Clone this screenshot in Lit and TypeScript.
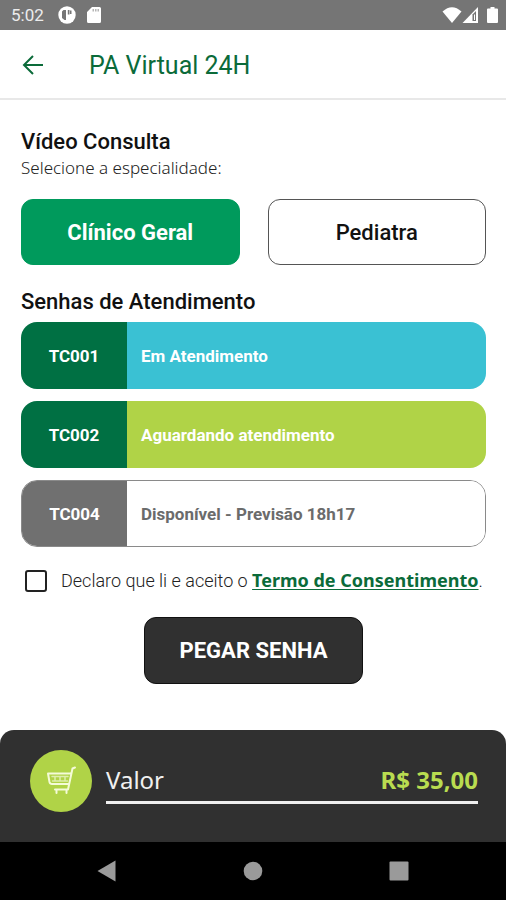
import { LitElement, html, css } from "lit";
import { customElement, property, state } from "lit/decorators.js";
import { classMap } from "lit/directives/class-map.js";

interface Ticket {
  code: string;
  label: string;
  status: "active" | "waiting" | "free";
}

@customElement("status-bar")
class StatusBar extends LitElement {
  static styles = css`
    :host {
      display: flex;
      align-items: center;
      height: 30px;
      padding: 0 8px 0 11px;
      background: #757575;
      color: #ececec;
      font: 400 17px/30px Roboto, sans-serif;
    }
    .time {
      margin-right: 14px;
    }
    .left {
      display: flex;
      align-items: center;
      gap: 11px;
      flex: 1;
    }
    .right {
      display: flex;
      align-items: center;
    }
    svg {
      display: block;
      fill: #ffffff;
    }
    .battery {
      margin-left: 8px;
    }
  `;

  render() {
    return html`
      <span class="time">5:02</span>
      <div class="left">
        <svg width="18" height="18" viewBox="0 0 18 18">
          <circle cx="9" cy="9" r="8.700" />
          <path fill="#757575" d="M4 5.500L5.500 4H8v10H6.500L4 12zM9.800 4h1.700v4.500H9.800zM12 4.500h1.500v3.500H12z" />
        </svg>
        <svg width="14" height="16" viewBox="0 0 14 16">
          <path d="M5 0h7.500A1.500 1.500 0 0 1 14 1.500v13a1.500 1.500 0 0 1-1.500 1.500h-11A1.500 1.500 0 0 1 0 14.500V5z" />
          <path fill="#b5b5b5" d="M5.500 2H7v2.500H5.500zM8 2h1.500v2.500H8zM10.500 2H12v2.500h-1.500z" />
        </svg>
      </div>
      <div class="right">
        <svg width="20" height="16" viewBox="0 0 20 16">
          <path d="M0.500 4.500Q10-4 19.500 4.500L10 16z" />
        </svg>
        <svg width="17" height="16" viewBox="0 0 17 16">
          <path d="M0.500 16L16 0v16z" />
          <path fill="#757575" d="M10.500 7.500l3.500-3.500V14h-3.500z" />
          <path d="M12 7.500h1V13h-1z" />
        </svg>
        <svg class="battery" width="11" height="16" viewBox="0 0 11 16">
          <path d="M3.500 0h4v1.500H10a1 1 0 0 1 1 1V15a1 1 0 0 1-1 1H1a1 1 0 0 1-1-1V2.500a1 1 0 0 1 1-1h2.500z" />
        </svg>
      </div>
    `;
  }
}

@customElement("ticket-row")
class TicketRow extends LitElement {
  @property({ attribute: false }) ticket!: Ticket;

  static styles = css`
    :host {
      display: block;
    }
    .row {
      display: flex;
      box-sizing: border-box;
      height: 67px;
      border-radius: 16px;
      overflow: hidden;
      font: 700 17px/24px Roboto, sans-serif;
      color: #ffffff;
    }
    .code {
      display: grid;
      place-items: center;
      flex: none;
      width: 106px;
      background: #007043;
    }
    .label {
      display: flex;
      align-items: center;
      flex: 1;
      padding-left: 14px;
    }
    .active .label {
      background: #3ac1d3;
    }
    .waiting .label {
      background: #b0d347;
    }
    .free {
      border: 1px solid #8a8a8a;
    }
    .free .code {
      width: 105px;
      background: #707070;
    }
    .free .label {
      background: #ffffff;
      color: #6b6b6b;
    }
  `;

  render() {
    const { code, label, status } = this.ticket;
    return html`
      <div class="row ${status}">
        <div class="code">${code}</div>
        <div class="label">${label}</div>
      </div>
    `;
  }
}

@customElement("app-root")
class AppRoot extends LitElement {
  @state() private specialty = "Clínico Geral";

  private specialties = ["Clínico Geral", "Pediatra"];

  private tickets: Ticket[] = [
    { code: "TC001", label: "Em Atendimento", status: "active" },
    { code: "TC002", label: "Aguardando atendimento", status: "waiting" },
    { code: "TC004", label: "Disponível - Previsão 18h17", status: "free" },
  ];

  static styles = css`
    :host {
      display: flex;
      flex-direction: column;
      min-height: 100vh;
      background: #ffffff;
      color: #111111;
      font-family: Roboto, sans-serif;
    }
    button {
      font-family: inherit;
      cursor: pointer;
      padding: 0;
    }
    svg {
      display: block;
    }
    .header {
      display: flex;
      align-items: center;
      gap: 44px;
      box-sizing: border-box;
      height: 70px;
      padding: 4px 21px 0;
      border-bottom: 2px solid #e8e8e8;
      color: #0b6b3a;
    }
    .back {
      border: 0;
      background: none;
      color: inherit;
    }
    h1 {
      margin: 0;
      font: 400 25px/32px Roboto, sans-serif;
    }
    main {
      display: flex;
      flex-direction: column;
      flex: 1;
      padding: 28px 20px 0 21px;
    }
    h2 {
      margin: 0;
      font: 500 22px/28px Roboto, sans-serif;
    }
    .hint {
      margin: 0 0 20px;
      font: 300 17px/23px "Noto Sans", sans-serif;
      color: #222222;
    }
    .specialties {
      display: grid;
      grid-template-columns: 1fr 1fr;
      gap: 28px;
      margin-bottom: 23px;
    }
    .specialty {
      height: 66px;
      border: 1px solid #555555;
      border-radius: 12px;
      background: #ffffff;
      color: #111111;
      font-size: 22px;
      font-weight: 500;
    }
    .specialty.selected {
      border-color: #009a5c;
      background: #009a5c;
      color: #ffffff;
      font-weight: 700;
    }
    .tickets {
      display: flex;
      flex-direction: column;
      gap: 12px;
      margin-top: 6px;
    }
    .consent {
      display: flex;
      align-items: center;
      gap: 14px;
      margin: 20px 0 23px;
      padding-left: 4px;
      font: 300 18px/26px Roboto, sans-serif;
      color: #222222;
      white-space: nowrap;
    }
    .consent input {
      appearance: none;
      flex: none;
      box-sizing: border-box;
      width: 22px;
      height: 22px;
      margin: 0;
      border: 2px solid #222222;
      border-radius: 3px;
    }
    .consent input:checked {
      background: #0b6b3a;
    }
    .consent a {
      color: #0b6b3a;
      font-family: "Noto Sans", sans-serif;
      font-weight: 700;
      text-underline-offset: 2px;
      text-decoration-thickness: 1px;
    }
    .submit {
      align-self: center;
      width: 219px;
      height: 67px;
      border: 1px solid #111111;
      border-radius: 12px;
      background: #303030;
      color: #ffffff;
      font-size: 22px;
      font-weight: 700;
    }
    .summary {
      display: flex;
      align-items: flex-start;
      gap: 14px;
      box-sizing: border-box;
      height: 112px;
      padding: 20px 28px 0 30px;
      border-radius: 14px 14px 0 0;
      background: #303030;
    }
    .cart {
      display: grid;
      place-items: center;
      flex: none;
      width: 62px;
      height: 62px;
      border-radius: 50%;
      background: #b0d347;
    }
    .line {
      display: flex;
      justify-content: space-between;
      flex: 1;
      margin-top: 14px;
      padding-bottom: 5px;
      border-bottom: 3px solid #efefef;
      font: 400 24px/32px "Noto Sans", sans-serif;
      color: #f0f0f0;
    }
    .price {
      color: #b9dc50;
      font-weight: 700;
    }
    .nav {
      display: flex;
      justify-content: space-around;
      align-items: center;
      height: 58px;
      padding: 0 34px;
      background: #000000;
    }
    .nav button {
      border: 0;
      background: none;
    }
  `;

  render() {
    return html`
      <status-bar></status-bar>
      <header class="header">
        <button class="back" aria-label="Voltar">
          <svg width="24" height="24" viewBox="0 0 24 24" fill="none" stroke="currentColor" stroke-width="2">
            <path d="M22 11H3.500M12 2L3 11l9 9" />
          </svg>
        </button>
        <h1>PA Virtual 24H</h1>
      </header>
      <main>
        <h2>Vídeo Consulta</h2>
        <p class="hint">Selecione a especialidade:</p>
        <div class="specialties">
          ${this.specialties.map(
            (name) => html`
              <button
                class=${classMap({ specialty: true, selected: name === this.specialty })}
                @click=${() => (this.specialty = name)}
              >
                ${name}
              </button>
            `
          )}
        </div>
        <h2>Senhas de Atendimento</h2>
        <div class="tickets">
          ${this.tickets.map((t) => html`<ticket-row .ticket=${t}></ticket-row>`)}
        </div>
        <div class="consent">
          <input type="checkbox" id="consent" />
          <label for="consent">Declaro que li e aceito o <a href="#termo">Termo de Consentimento</a>.</label>
        </div>
        <button class="submit">PEGAR SENHA</button>
      </main>
      <section class="summary">
        <div class="cart">
          <svg width="30" height="30" viewBox="0 0 30 30" fill="none" stroke="#f4fbd8" stroke-width="2" stroke-linecap="round" stroke-linejoin="round">
            <path d="M29 1.500l-2.500 1L22 23.500H9M24.500 7.500H2l1.500 8.500q0.500 2 2.500 2h17M10.500 24v3M20.500 24v3" />
            <path stroke-width="1.500" d="M6 10.500h16M6.500 15h15M9 11v4M14 11v4M19 11v4" opacity="0.700" />
          </svg>
        </div>
        <div class="line">
          <span>Valor</span>
          <span class="price">R$ 35,00</span>
        </div>
      </section>
      <nav class="nav">
        <button aria-label="Voltar">
          <svg width="20" height="22" viewBox="0 0 20 22" fill="#9a9a9a"><path d="M18.500 0.500v21L0.500 11z" /></svg>
        </button>
        <button aria-label="Início">
          <svg width="20" height="20" viewBox="0 0 20 20" fill="#9a9a9a"><circle cx="10" cy="10" r="9.300" /></svg>
        </button>
        <button aria-label="Recentes">
          <svg width="20" height="20" viewBox="0 0 20 20" fill="#9a9a9a"><rect x="0.500" y="0.500" width="19" height="19" rx="1" /></svg>
        </button>
      </nav>
    `;
  }
}
